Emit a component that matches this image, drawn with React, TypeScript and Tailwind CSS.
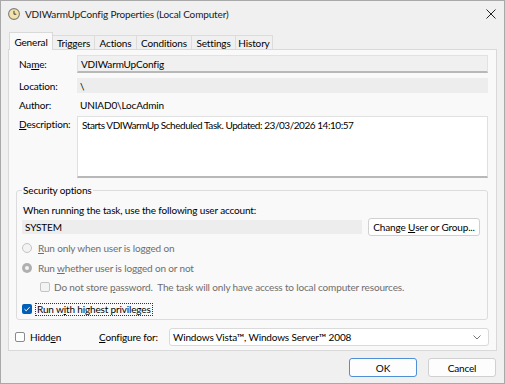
import React from "react";

const font = { fontFamily: 'Lato, "Noto Sans", Arial, sans-serif' };

function ClockIcon() {
  return (
    <svg width="12" height="12" viewBox="0 0 12 12">
      <circle cx="6" cy="6" r="5.4" fill="#f4e3a8" stroke="#7d7d7d" strokeWidth="1.1" />
      <path d="M6 2.8V6.2H8.3" fill="none" stroke="#3c3c3c" strokeWidth="1" />
    </svg>
  );
}

function Tab({ label, w, active }: { label: string; w: number; active?: boolean }) {
  if (active) {
    return (
      <div
        className="relative z-10 flex h-[18px] items-start justify-center border border-b-0 border-[#d9d9d9] bg-[#f9f9f9] pt-[2px] text-[10px] leading-[14px] text-black"
        style={{ width: w }}
      >
        {label}
      </div>
    );
  }
  return (
    <div
      className="flex h-[15px] items-center justify-center border border-b-0 border-l-0 border-[#dcdcdc] bg-[#f0f0f0] text-[10px] leading-[14px] text-black"
      style={{ width: w }}
    >
      {label}
    </div>
  );
}

function Radio({ checked }: { checked?: boolean }) {
  if (checked) {
    return (
      <div className="flex h-[10px] w-[10px] items-center justify-center rounded-full bg-[#b0b0b0]">
        <div className="h-[4px] w-[4px] rounded-full bg-[#f4f4f4]" />
      </div>
    );
  }
  return <div className="h-[10px] w-[10px] rounded-full border border-[#c4c4c4] bg-[#f3f3f3]" />;
}

export default function App() {
  return (
    <div
      className="flex h-[384px] w-[505px] flex-col overflow-hidden border border-[#a9a9a9] bg-[#f0f0f0] text-[10px] tracking-[-0.15px] text-black"
      style={font}
    >
      {/* Title bar */}
      <div className="flex h-[25px] items-center pl-[7px] pr-[7px]">
        <ClockIcon />
        <div className="ml-[5px] text-[10px] leading-[16px] text-[#1a1a1a]">
          VDIWarmUpConfig Properties (Local Computer)
        </div>
        <div className="ml-auto flex h-[12px] w-[12px] items-center justify-center">
          <svg width="10" height="10" viewBox="0 0 10 10">
            <path d="M0.5 0.5L9.5 9.5M9.5 0.5L0.5 9.5" stroke="#222" strokeWidth="1" />
          </svg>
        </div>
      </div>

      {/* Tabs */}
      <div className="ml-[8px] mt-[6px] flex items-end">
        <Tab label="General" w={44} active />
        <Tab label="Triggers" w={42} />
        <Tab label="Actions" w={42} />
        <Tab label="Conditions" w={55} />
        <Tab label="Settings" w={44} />
        <Tab label="History" w={37} />
      </div>

      {/* Panel */}
      <div className="-mt-[1px] ml-[7px] flex h-[302px] w-[489px] flex-col border border-[#d9d9d9] bg-[#f9f9f9]">
        {/* Name */}
        <div className="mt-[5px] flex h-[18px] items-center">
          <div className="w-[68px] pl-[10px] leading-[16px]">
            Na<span className="underline">m</span>e:
          </div>
          <div className="flex h-[18px] w-[411px] items-center border border-b-2 border-[#e2e2e2] border-b-[#b8b8b8] bg-[#f0f0f0] pl-[3px] leading-[16px]">
            VDIWarmUpConfig
          </div>
        </div>
        {/* Location */}
        <div className="mt-[5px] flex h-[15px] items-center">
          <div className="w-[68px] pl-[10px] leading-[16px]">Location:</div>
          <div className="flex h-[15px] w-[411px] items-center bg-[#ededed] pl-[3px] leading-[16px]">\</div>
        </div>
        {/* Author */}
        <div className="mt-[4px] flex h-[16px] items-center">
          <div className="w-[68px] pl-[10px] leading-[16px]">Author:</div>
          <div className="pl-[3px] leading-[16px]">UNIAD0\LocAdmin</div>
        </div>
        {/* Description */}
        <div className="mt-[3px] flex items-start">
          <div className="w-[68px] pl-[10px] leading-[16px]">
            <span className="underline">D</span>escription:
          </div>
          <div className="h-[62px] w-[411px] border border-b-2 border-[#e0e0e0] border-b-[#b8b8b8] bg-white pl-[4px] leading-[16px] tracking-[-0.45px]">
            Starts VDIWarmUp Scheduled Task. Updated: 23/03/2026 14:10:57
          </div>
        </div>

        {/* Security options group */}
        <div className="relative ml-[7px] mt-[12px] flex h-[130px] w-[472px] flex-col rounded-[3px] border border-[#dcdcdc]">
          <div className="absolute -top-[9px] left-[5px] bg-[#f9f9f9] px-[1px] leading-[16px]">Security options</div>
          <div className="mt-[11px] pl-[6px] leading-[16px]">
            When running the task, use the following user account:
          </div>
          <div className="flex h-[18px] items-center pl-[5px]">
            <div className="flex h-[14px] w-[340px] items-center bg-[#ededed] pl-[3px] leading-[16px]">SYSTEM</div>
            <div className="ml-[6px] flex h-[18px] w-[112px] items-center justify-center whitespace-pre rounded-[3px] border border-[#d0d0d0] bg-white leading-[16px]">
              {"Change "}
              <span className="underline">U</span>
              {"ser or Group..."}
            </div>
          </div>
          <div className="mt-[4px] flex h-[16px] items-center pl-[5px] text-[#6e6e6e]">
            <Radio />
            <span className="ml-[6px] leading-[16px]">
              <span className="underline">R</span>un only when user is logged on
            </span>
          </div>
          <div className="mt-[4px] flex h-[16px] items-center pl-[5px] text-[#6e6e6e]">
            <Radio checked />
            <span className="ml-[6px] leading-[16px]">
              Run <span className="underline">w</span>hether user is logged on or not
            </span>
          </div>
          <div className="mt-[3px] flex h-[16px] items-center pl-[23px] text-[#6e6e6e]">
            <div className="h-[10px] w-[10px] rounded-[2px] border border-[#c4c4c4] bg-[#f3f3f3]" />
            <span className="ml-[4px] whitespace-nowrap leading-[16px]">
              Do not store <span className="underline">p</span>assword.&nbsp; The task will only have access to local computer resources.
            </span>
          </div>
          <div className="mt-[6px] flex h-[16px] items-center pl-[5px]">
            <div className="flex h-[10px] w-[10px] items-center justify-center rounded-[2px] bg-[#005fb8]">
              <svg width="8" height="8" viewBox="0 0 8 8">
                <path d="M1.5 4.2L3.2 5.8L6.6 2.2" fill="none" stroke="#fff" strokeWidth="1" />
              </svg>
            </div>
            <span className="ml-[3px] whitespace-nowrap border border-dotted border-[#333] px-[1px] leading-[11px]">
              Run w<span className="underline">i</span>th highest privileges
            </span>
          </div>
        </div>

        {/* Hidden / Configure row */}
        <div className="mt-[8px] flex h-[18px] items-center">
          <div className="ml-[6px] h-[10px] w-[10px] rounded-[2px] border border-[#8a8a8a] bg-white" />
          <span className="ml-[5px] w-[40px] leading-[16px]">
            Hidd<span className="underline">e</span>n
          </span>
          <span className="ml-[29px] whitespace-nowrap leading-[16px]">
            <span className="underline">C</span>onfigure for:
          </span>
          <div className="ml-auto mr-[7px] flex h-[18px] w-[320px] items-center rounded-[3px] border border-[#dadada] bg-white pl-[3px] pr-[7px] leading-[16px]">
            <span>Windows Vista™, Windows Server™ 2008</span>
            <svg className="ml-auto" width="8" height="5" viewBox="0 0 8 5">
              <path d="M0.5 0.5L4 4L7.5 0.5" fill="none" stroke="#777" strokeWidth="1" />
            </svg>
          </div>
        </div>
      </div>

      {/* Buttons */}
      <div className="mt-[7px] flex justify-end gap-[11px] pr-[8px]">
        <div className="flex h-[19px] w-[68px] items-center justify-center rounded-[3px] border border-[#4e8fd6] bg-[#fdfdfd] leading-[16px]">
          OK
        </div>
        <div className="flex h-[19px] w-[68px] items-center justify-center rounded-[3px] border border-[#d0d0d0] bg-[#fdfdfd] leading-[16px]">
          Cancel
        </div>
      </div>
    </div>
  );
}
